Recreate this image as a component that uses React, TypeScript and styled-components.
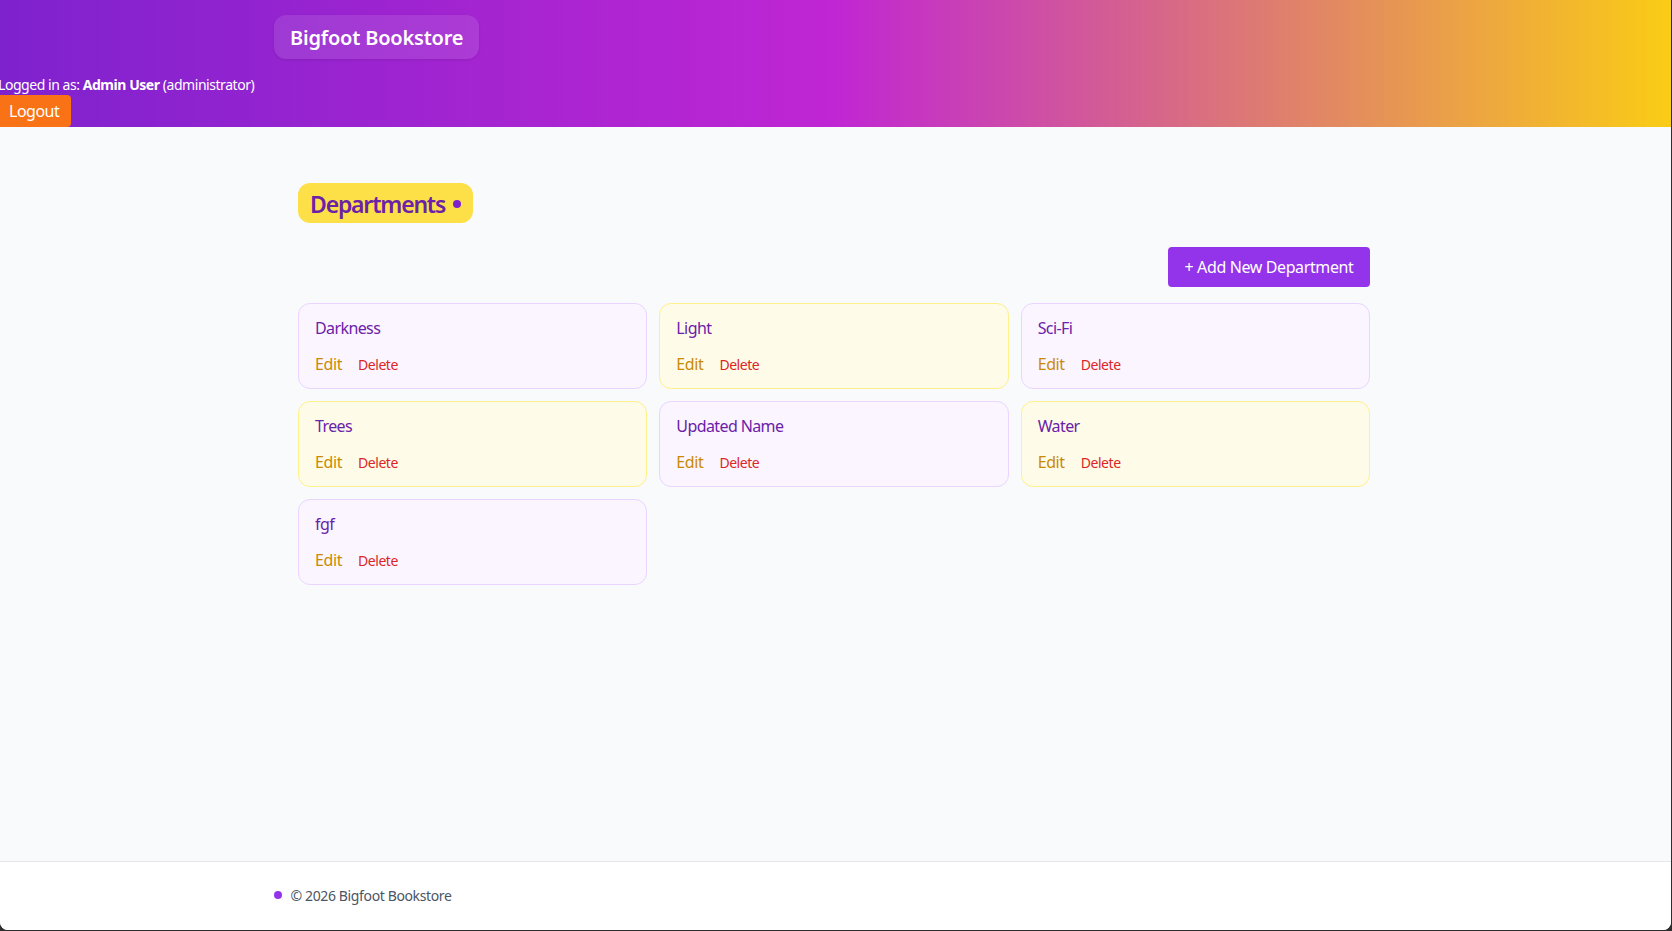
import styled, { createGlobalStyle } from "styled-components";

const GlobalStyle = createGlobalStyle`
  html, body {
    margin: 0;
    padding: 0;
    height: 100%;
    background: #2e2e2e;
    overflow: hidden;
  }
  body, button {
    font-family: "Noto Sans", "Open Sans", "Liberation Sans", sans-serif;
  }
`;

const Page = styled.div`
  width: 1671px;
  height: 930px;
  display: flex;
  flex-direction: column;
  overflow: hidden;
  background: #f9fafb;
  border-radius: 0 0 8px 8px;
`;

const Header = styled.header`
  height: 127px;
  padding-top: 15px;
  box-sizing: border-box;
  background: linear-gradient(to right, #7e22ce 0%, #c026d3 50%, #facc15 100%);
  color: #fff;
  flex: none;
`;

const Brand = styled.div`
  width: fit-content;
  height: 44px;
  margin-left: 274px;
  padding: 0 16px;
  display: flex;
  align-items: center;
  background: rgba(255, 255, 255, 0.1);
  border-radius: 12px;
  box-shadow: 0 1px 3px rgba(0, 0, 0, 0.1);
  font-size: 20px;
  font-weight: 600;
  letter-spacing: -0.2px;
`;

const UserInfo = styled.div`
  margin: 16px 0 0 -2px;
  height: 20px;
  font-size: 14px;
  line-height: 20px;
  letter-spacing: -0.45px;
  white-space: nowrap;
`;

const LogoutButton = styled.button`
  display: block;
  width: 71px;
  height: 32px;
  padding: 0 0 0 9px;
  border: none;
  border-radius: 0 4px 4px 0;
  background: #f97316;
  color: #fff;
  font-size: 16px;
  letter-spacing: -0.5px;
  text-align: left;
`;

const Main = styled.main`
  flex: 1;
  width: 1072px;
  margin-left: 298px;
  padding-top: 56px;
`;

const TitlePill = styled.h1`
  width: 175px;
  box-sizing: border-box;
  height: 40px;
  margin: 0;
  padding: 1px 12px 0;
  display: flex;
  align-items: center;
  justify-content: space-between;
  background: #fde047;
  border-radius: 12px;
  color: #6b21a8;
  font-size: 23px;
  font-weight: 600;
  letter-spacing: -1.2px;
  white-space: nowrap;
`;

const Dot = styled.span<{ $color: string }>`
  width: 8px;
  height: 8px;
  border-radius: 50%;
  background: ${(p) => p.$color};
  flex: none;
`;

const Toolbar = styled.div`
  display: flex;
  justify-content: flex-end;
  margin: 24px 0 16px;
`;

const AddButton = styled.button`
  width: 202px;
  height: 40px;
  padding: 0;
  border: none;
  border-radius: 4px;
  background: #9333ea;
  color: #fff;
  font-size: 16px;
  letter-spacing: -0.38px;
`;

const CardGrid = styled.div`
  display: grid;
  grid-template-columns: repeat(3, 1fr);
  gap: 12px;
`;

const Card = styled.div<{ $tone: "purple" | "yellow" }>`
  height: 86px;
  box-sizing: border-box;
  padding: 12px 16px;
  border-radius: 12px;
  border: 1px solid ${(p) => (p.$tone === "purple" ? "#e9d5ff" : "#fef08a")};
  background: ${(p) => (p.$tone === "purple" ? "#faf5ff" : "#fefce8")};
`;

const CardName = styled.div`
  color: #6b21a8;
  font-size: 16px;
  line-height: 24px;
  letter-spacing: -0.6px;
`;

const CardActions = styled.div`
  display: flex;
  align-items: center;
  gap: 16px;
  margin-top: 12px;
  height: 24px;
`;

const EditLink = styled.a`
  color: #ca8a04;
  font-size: 16px;
  letter-spacing: -0.4px;
`;

const DeleteLink = styled.a`
  color: #dc2626;
  font-size: 14px;
  letter-spacing: -0.45px;
`;

const Footer = styled.footer`
  height: 69px;
  box-sizing: border-box;
  flex: none;
  padding: 0 0 2px 274px;
  display: flex;
  align-items: center;
  gap: 8.5px;
  background: #fff;
  border-top: 1px solid #e5e7eb;
  color: #4b5563;
  font-size: 14px;
  letter-spacing: -0.37px;
`;

const departments: { name: string; tone: "purple" | "yellow" }[] = [
  { name: "Darkness", tone: "purple" },
  { name: "Light", tone: "yellow" },
  { name: "Sci-Fi", tone: "purple" },
  { name: "Trees", tone: "yellow" },
  { name: "Updated Name", tone: "purple" },
  { name: "Water", tone: "yellow" },
  { name: "fgf", tone: "purple" },
];

export default function App() {
  return (
    <>
      <GlobalStyle />
      <Page>
        <Header>
          <Brand>Bigfoot Bookstore</Brand>
          <UserInfo>
            Logged in as: <strong>Admin User</strong> (administrator)
          </UserInfo>
          <LogoutButton>Logout</LogoutButton>
        </Header>
        <Main>
          <TitlePill>
            Departments
            <Dot $color="#7e22ce" />
          </TitlePill>
          <Toolbar>
            <AddButton>+ Add New Department</AddButton>
          </Toolbar>
          <CardGrid>
            {departments.map((d) => (
              <Card key={d.name} $tone={d.tone}>
                <CardName>{d.name}</CardName>
                <CardActions>
                  <EditLink>Edit</EditLink>
                  <DeleteLink>Delete</DeleteLink>
                </CardActions>
              </Card>
            ))}
          </CardGrid>
        </Main>
        <Footer>
          <Dot $color="#9333ea" />
          © 2026 Bigfoot Bookstore
        </Footer>
      </Page>
    </>
  );
}
